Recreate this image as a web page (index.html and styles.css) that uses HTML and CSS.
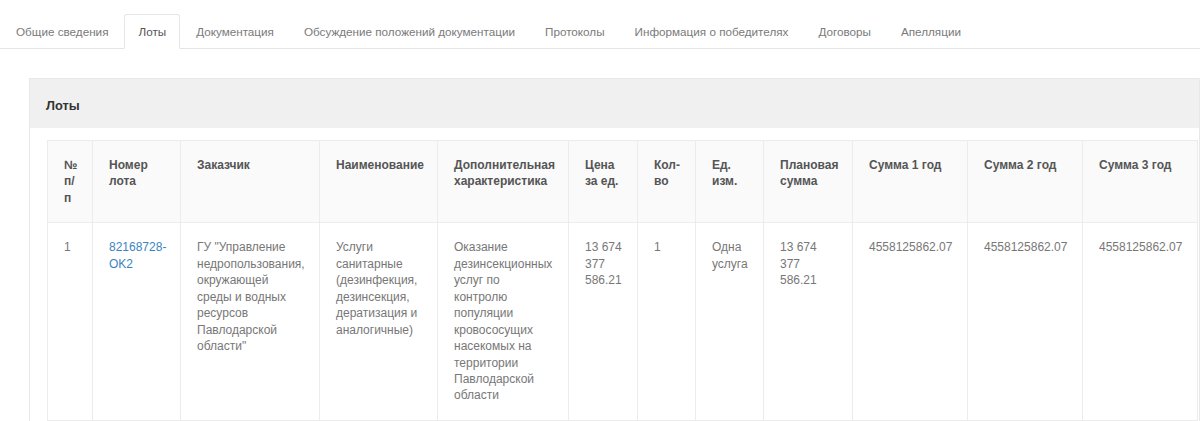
FILE: index.html
```html
<!DOCTYPE html>
<html lang="ru">
<head>
<meta charset="utf-8">
<title>Лоты</title>
<link rel="stylesheet" href="styles.css">
</head>
<body>
<ul class="tabs">
  <li class="tab"><a href="#">Общие сведения</a></li>
  <li class="tab active"><a href="#">Лоты</a></li>
  <li class="tab"><a href="#">Документация</a></li>
  <li class="tab"><a href="#">Обсуждение положений документации</a></li>
  <li class="tab"><a href="#">Протоколы</a></li>
  <li class="tab"><a href="#">Информация о победителях</a></li>
  <li class="tab"><a href="#">Договоры</a></li>
  <li class="tab"><a href="#">Апелляции</a></li>
</ul>
<div class="panel">
  <div class="panel-heading">Лоты</div>
  <div class="panel-body">
    <table class="lots">
      <colgroup>
        <col class="c-n"><col class="c-num"><col class="c-cust"><col class="c-name"><col class="c-add">
        <col class="c-price"><col class="c-qty"><col class="c-unit"><col class="c-plan">
        <col class="c-sum"><col class="c-sum"><col class="c-sum">
      </colgroup>
      <thead>
        <tr>
          <th>№ п/ п</th>
          <th>Номер лота</th>
          <th>Заказчик</th>
          <th>Наименование</th>
          <th>Дополнительная характеристика</th>
          <th>Цена за ед.</th>
          <th>Кол-во</th>
          <th>Ед. изм.</th>
          <th>Плановая сумма</th>
          <th>Сумма 1 год</th>
          <th>Сумма 2 год</th>
          <th>Сумма 3 год</th>
        </tr>
      </thead>
      <tbody>
        <tr>
          <td>1</td>
          <td><a class="link" href="#">82168728-OK2</a></td>
          <td>ГУ "Управление недропользования, окружающей среды и водных ресурсов Павлодарской области"</td>
          <td>Услуги санитарные (дезинфекция, дезинсекция, дератизация и аналогичные)</td>
          <td>Оказание дезинсекционных услуг по контролю популяции кровососущих насекомых на территории Павлодарской области</td>
          <td class="tight">13 674 377 586.21</td>
          <td>1</td>
          <td>Одна услуга</td>
          <td>13 674 377 586.21</td>
          <td>4558125862.07</td>
          <td>4558125862.07</td>
          <td>4558125862.07</td>
        </tr>
      </tbody>
    </table>
  </div>
</div>
</body>
</html>
```
FILE: styles.css
```css
html, body {
  margin: 0;
  padding: 0;
  overflow: hidden;
  background: #fff;
}
body {
  font-family: "Liberation Sans", Arial, sans-serif;
  font-size: 12px;
  line-height: 17px;
  color: #777;
}
.tabs {
  list-style: none;
  margin: 14px 0 0 0;
  padding: 0 0 0 1px;
  display: flex;
  border-bottom: 1px solid #e6e6e6;
  font-size: 11.7px;
}
.tab {
  margin: 0 1px -1px 1px;
}
.tab a {
  display: block;
  padding: 8px 13px;
  line-height: 17px;
  border: 1px solid transparent;
  border-radius: 3px 3px 0 0;
  color: #7a7a7a;
  text-decoration: none;
}
.tab.active a {
  color: #555;
  background: #fff;
  border-color: #e6e6e6 #e6e6e6 transparent;
}
.panel {
  margin: 29px 0 0 29px;
  width: 1169px;
  border: 1px solid #e8e8e8;
  border-bottom: none;
}
.panel-heading {
  background: #f0f0f0;
  padding: 18px 16px 14px 16px;
  font-weight: bold;
  font-size: 12.8px;
  color: #333;
  line-height: 17px;
}
.panel-body {
  padding: 12px 0 20px 17px;
}
.lots {
  border-collapse: collapse;
  table-layout: fixed;
  width: 1150px;
  border: 1px solid #ececec;
  line-height: 16.45px;
}
.c-n { width: 45px; }
.c-num { width: 88px; }
.c-cust { width: 139px; }
.c-name { width: 118px; }
.c-add { width: 131px; }
.c-price { width: 69px; }
.c-qty { width: 58px; }
.c-unit { width: 68px; }
.c-plan { width: 89px; }
.c-sum { width: 115px; }
.lots th, .lots td {
  border: 1px solid #ececec;
  padding: 16px;
  text-align: left;
  vertical-align: top;
}
.lots td.tight {
  padding-right: 13px;
}
.lots th {
  background: #fafafa;
  color: #555;
  font-weight: bold;
}
.lots td {
  color: #777;
}
.link {
  color: #3a85c0;
  text-decoration: none;
}
```
